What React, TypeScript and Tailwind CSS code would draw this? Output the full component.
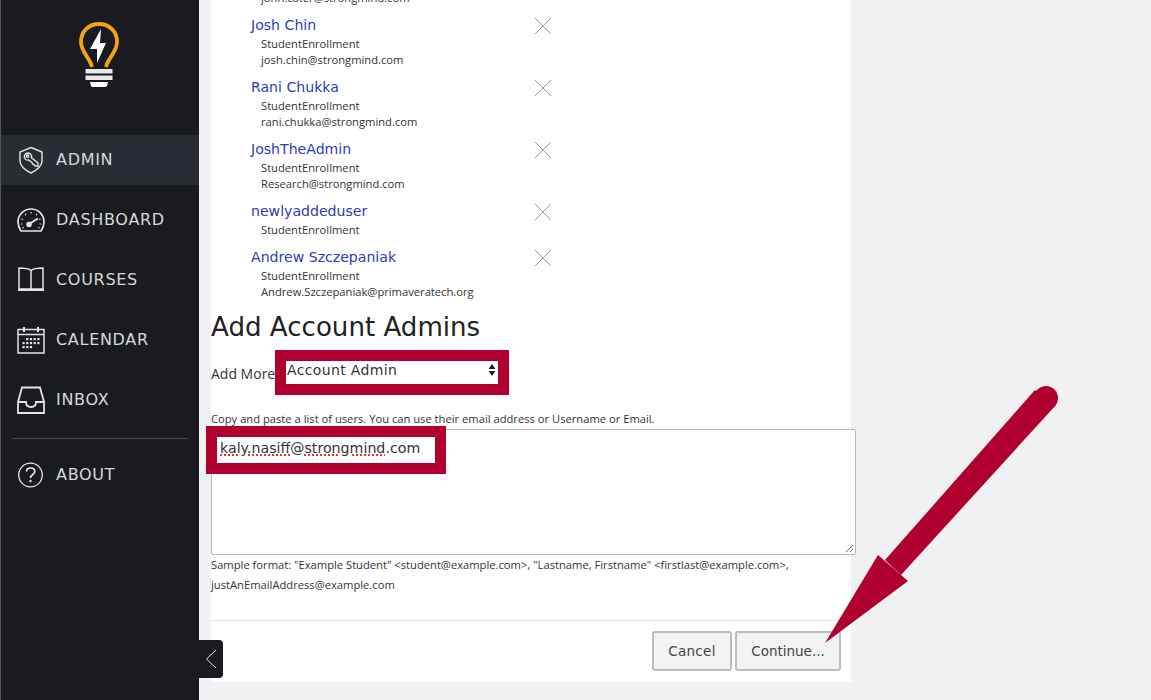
const ICON = "w-[28px] h-[28px] shrink-0";

function Bulb() {
  return (
    <svg width="40" height="66" viewBox="0 0 40 66" fill="none">
      <path d="M13 45 C11 36 2 30 2 20 C2 9 10 2 20 2 C30 2 38 9 38 20 C38 30 29 36 27 45" stroke="#f7a30e" strokeWidth="3.800" fill="none" />
      <path d="M22 7 L11 27 L18 27 L18 41 L27 21 L21 21 Z" fill="#fff" />
      <rect x="6.500" y="47" width="27" height="4.500" fill="#e8e8e8" />
      <rect x="6.500" y="53.500" width="27" height="4.500" fill="#e8e8e8" />
      <path d="M11 60 H29 L28 64 Q27 65 26 65 H14 Q12 65 12 64 Z" fill="#fff" />
    </svg>
  );
}

function ShieldKey() {
  return (
    <svg className={ICON} viewBox="0 0 28 28" fill="none" stroke="#e4e4e4" strokeWidth="1.400">
      <path d="M14 1.500 L25 6 V15 C25 20 20 24 14 27 C8 24 3 20 3 15 V6 Z" />
      <path d="M8 8.500 C9.500 6.500 12 6.500 13.500 8 C14.500 9 14.800 10.500 14.300 11.500 L21 17 V20 H18 L17 18.500 L15.500 18 L15 16.500 L11.500 14 C10 14.300 8.500 13.800 7.800 12.500 C7 11.200 7.200 9.800 8 8.500 Z" />
      <circle cx="10.500" cy="10" r="1.200" />
    </svg>
  );
}

function Gauge() {
  return (
    <svg className={ICON} viewBox="0 0 28 28" fill="none" stroke="#e4e4e4" strokeWidth="1.500">
      <path d="M4 25 C2 22 1 19.500 1 16 C1 8.500 7 3 14 3 C21 3 27 8.500 27 16 C27 19.500 26 22 24 25 Z" strokeWidth="1.700" />
      <path d="M12 18 L21 12.500" strokeWidth="2" />
      <circle cx="12" cy="18.500" r="2" fill="#e4e4e4" />
      <path d="M14 6v1.500M8 8l1 1.200M20 8l-1 1.200M4.500 13l1.500.5M4 18h1.500M5.500 22l1.200-.6M23.500 13l-1.500.5M24 18h-1.500M22.500 22l-1.200-.6" strokeWidth="1.200" />
    </svg>
  );
}

function Book() {
  return (
    <svg className={ICON} viewBox="0 0 28 28" fill="none" stroke="#e4e4e4" strokeWidth="1.500">
      <path d="M14 4.500 C12 2.500 7 2 2 2 V23 H26 V2 C21 2 16 2.500 14 4.500 Z M14 4.500 V25" />
      <path d="M1 24 H27" strokeWidth="2" />
    </svg>
  );
}

function Calendar() {
  const dots: React.ReactElement[] = [];
  for (let r = 0; r < 3; r++) {
    for (let c = 0; c < 5; c++) {
      if ((r === 0 && c < 1) || (r === 2 && c > 2)) continue;
      dots.push(<rect key={r + "-" + c} x={5.500 + c * 3.700} y={12 + r * 4} width="2.200" height="2.200" fill="#e4e4e4" stroke="none" />);
    }
  }
  return (
    <svg className={ICON} viewBox="0 0 28 28" fill="none" stroke="#e4e4e4" strokeWidth="1.500">
      <rect x="1" y="3.500" width="26" height="23.500" />
      <path d="M1 8.500 H27" />
      <path d="M7 1 V6 M21 1 V6" strokeWidth="2" />
      {dots}
    </svg>
  );
}

function Inbox() {
  return (
    <svg className={ICON} viewBox="0 0 28 28" fill="none" stroke="#e4e4e4" strokeWidth="1.800">
      <path d="M1 16 L5 1.500 H23 L27 16" />
      <path d="M1 16 V27 H27 V16 H19 C19 19 17 21 14 21 C11 21 9 19 9 16 Z" />
    </svg>
  );
}

function Help() {
  return (
    <svg className={ICON} viewBox="0 0 28 28" fill="none" stroke="#e4e4e4" strokeWidth="1.300">
      <circle cx="13.500" cy="14" r="11.800" />
      <path d="M9.500 10.500 C9.500 8 11.500 7 13.500 7 C16 7 17.800 8.500 17.800 10.500 C17.800 13.500 13.500 13.500 13.500 17" strokeWidth="1.700" />
      <circle cx="13.500" cy="20" r="1.200" fill="#e4e4e4" stroke="none" />
    </svg>
  );
}

function NavItem({ icon, label, active, h = 60 }: { icon: React.ReactNode; label: string; active?: boolean; h?: number }) {
  return (
    <div
      className={
        "flex items-center gap-[11px] pl-[16px] text-[16px] text-[#d8d8d8] tracking-[0.7px] h-[50px] " +
        (active ? "bg-[#292c33]" : "")
      }
      style={{ marginBottom: h - 50 }}
    >
      {icon}
      <span>{label}</span>
    </div>
  );
}

function Person({ name, email, mt }: { name: string; email?: string; mt: string }) {
  return (
    <div className={"relative pl-[40px] " + mt}>
      <div className="pb-[1px] text-[14.100px] leading-[20px] text-[#2a3cb8] font-['DejaVu_Sans',sans-serif]">{name}</div>
      <div className="pl-[10px] pb-[1px] text-[11.200px] leading-[16px] text-[#333]">
        <div>StudentEnrollment</div>
        {email && <div>{email}</div>}
      </div>
      <svg className="absolute left-[323px] top-[2px]" width="18" height="18" viewBox="0 0 18 18" stroke="#9a9a9a" strokeWidth="1">
        <path d="M1 1 L17 17 M17 1 L1 17" />
      </svg>
    </div>
  );
}

export default function App() {
  return (
    <div className="flex h-[700px] w-[1151px] overflow-hidden bg-[#f1f1f3] font-['Open_Sans',sans-serif]">
      <aside className="relative z-10 w-[199px] shrink-0 border-l border-[#55565a] bg-[#1a1b20] font-['DejaVu_Sans',sans-serif]">
        <div className="flex h-[135px] justify-center pt-[22px] pr-[3px]">
          <Bulb />
        </div>
        <NavItem icon={<ShieldKey />} label="ADMIN" active />
        <NavItem icon={<Gauge />} label="DASHBOARD" />
        <NavItem icon={<Book />} label="COURSES" />
        <NavItem icon={<Calendar />} label="CALENDAR" />
        <NavItem icon={<Inbox />} label="INBOX" h={63} />
        <div className="mx-[11px] border-t border-[#47484d]" />
        <div className="h-[11px]" />
        <NavItem icon={<Help />} label="ABOUT" />
        <div className="absolute left-[198px] top-[640px] flex h-[38px] w-[24px] items-center justify-center rounded-r-[4px] bg-[#1a1b20]">
          <svg width="12" height="20" viewBox="0 0 12 20" fill="none" stroke="#e8e8e8" strokeWidth="1">
            <path d="M11 1 L1.500 10 L11 19" />
          </svg>
        </div>
      </aside>

      <main className="relative ml-[12px] h-[682px] w-[640px] bg-white">
        <div className="-mt-[1px] pl-[50px] text-[11.200px] leading-[16px] text-[#333] h-[6px] overflow-hidden">
          <div className="-mt-[9px]">john.cater@strongmind.com</div>
        </div>
        <Person name="Josh Chin" email="josh.chin@strongmind.com" mt="mt-[10px]" />
        <Person name="Rani Chukka" email="rani.chukka@strongmind.com" mt="mt-[8px]" />
        <Person name="JoshTheAdmin" email="Research@strongmind.com" mt="mt-[8px]" />
        <Person name="newlyaddeduser" mt="mt-[8px]" />
        <Person name="Andrew Szczepaniak" email="Andrew.Szczepaniak@primaveratech.org" mt="mt-[8px]" />

        <h2 className="mt-[9px] text-[26.100px] leading-[34px] text-[#222] font-['DejaVu_Sans',sans-serif]">Add Account Admins</h2>

        <div className="mt-[6px] flex h-[45px] items-center">
          <span className="text-[14px] text-[#333] mt-[2px] w-[64px] whitespace-nowrap">Add More</span>
          <div className="flex h-[45px] w-[234px] border-[11px] border-[#b0002f] bg-white px-[1px]">
            <span className="text-[14px] tracking-[0.35px] leading-[20px] -mt-[1px] text-[#333] font-['DejaVu_Sans',sans-serif]">Account Admin</span>
            <svg className="ml-auto mt-[2px] mr-[1px]" width="8" height="14" viewBox="0 0 8 14" fill="#222">
              <path d="M4 1 L7.500 6 H0.500 Z M4 13 L0.500 8 H7.500 Z" />
            </svg>
          </div>
        </div>

        <div className="mt-[16px] text-[11.200px] leading-[16px] text-[#333]">
          Copy and paste a list of users. You can use their email address or Username or Email.
        </div>

        <div className="relative mt-[2px] h-[126px] w-[645px] rounded-[2px] border border-[#b5b8bc] bg-white">
          <div className="absolute -left-[6px] -top-[4px] h-[48px] w-[240px] border-[11px] border-[#b0002f] bg-white pl-[3px] pt-[1px]">
            <span className="block w-fit whitespace-nowrap text-[14.200px] leading-[20px] text-[#333] font-['DejaVu_Sans',sans-serif] underline decoration-dotted decoration-[#f03030] decoration-2">kaly.nasiff@strongmind<span className="inline-block">.com</span></span>
          </div>
          <svg className="absolute right-[1px] bottom-[1px]" width="9" height="9" viewBox="0 0 9 9" stroke="#555" strokeWidth="0.900">
            <path d="M1 8 L8 1 M5 8 L8 5" />
          </svg>
        </div>

        <div className="text-[11.200px] leading-[20px] text-[#333]">
          Sample format: "Example Student" &lt;student@example.com&gt;, "Lastname, Firstname" &lt;firstlast@example.com&gt;,
          <br />
          justAnEmailAddress@example.com
        </div>

        <div className="mt-[25px] flex justify-end gap-[3px] border-t border-[#dfe0e2] pt-[10px] pr-[10px]">
          <button className="h-[40px] w-[80px] rounded-[3px] border-2 border-[#b9bec4] bg-[#f3f3f4] text-[13.500px] tracking-[0.3px] text-[#444] font-['DejaVu_Sans',sans-serif]">Cancel</button>
          <button className="h-[40px] w-[106px] rounded-[3px] border-2 border-[#b9bec4] bg-[#f3f3f4] text-[13.500px] text-[#444] font-['DejaVu_Sans',sans-serif]">Continue...</button>
        </div>
      </main>

      <svg className="pointer-events-none absolute left-0 top-0 z-20" width="1151" height="700" viewBox="0 0 1151 700">
        <path d="M1047 398 L1035 390 L885 560 L901 575 L1056 405 Z" fill="#b0002f" />
        <circle cx="1046" cy="398" r="12" fill="#b0002f" />
        <path d="M878 555 L908 581 L825 643 Z" fill="#b0002f" />
      </svg>
    </div>
  );
}
